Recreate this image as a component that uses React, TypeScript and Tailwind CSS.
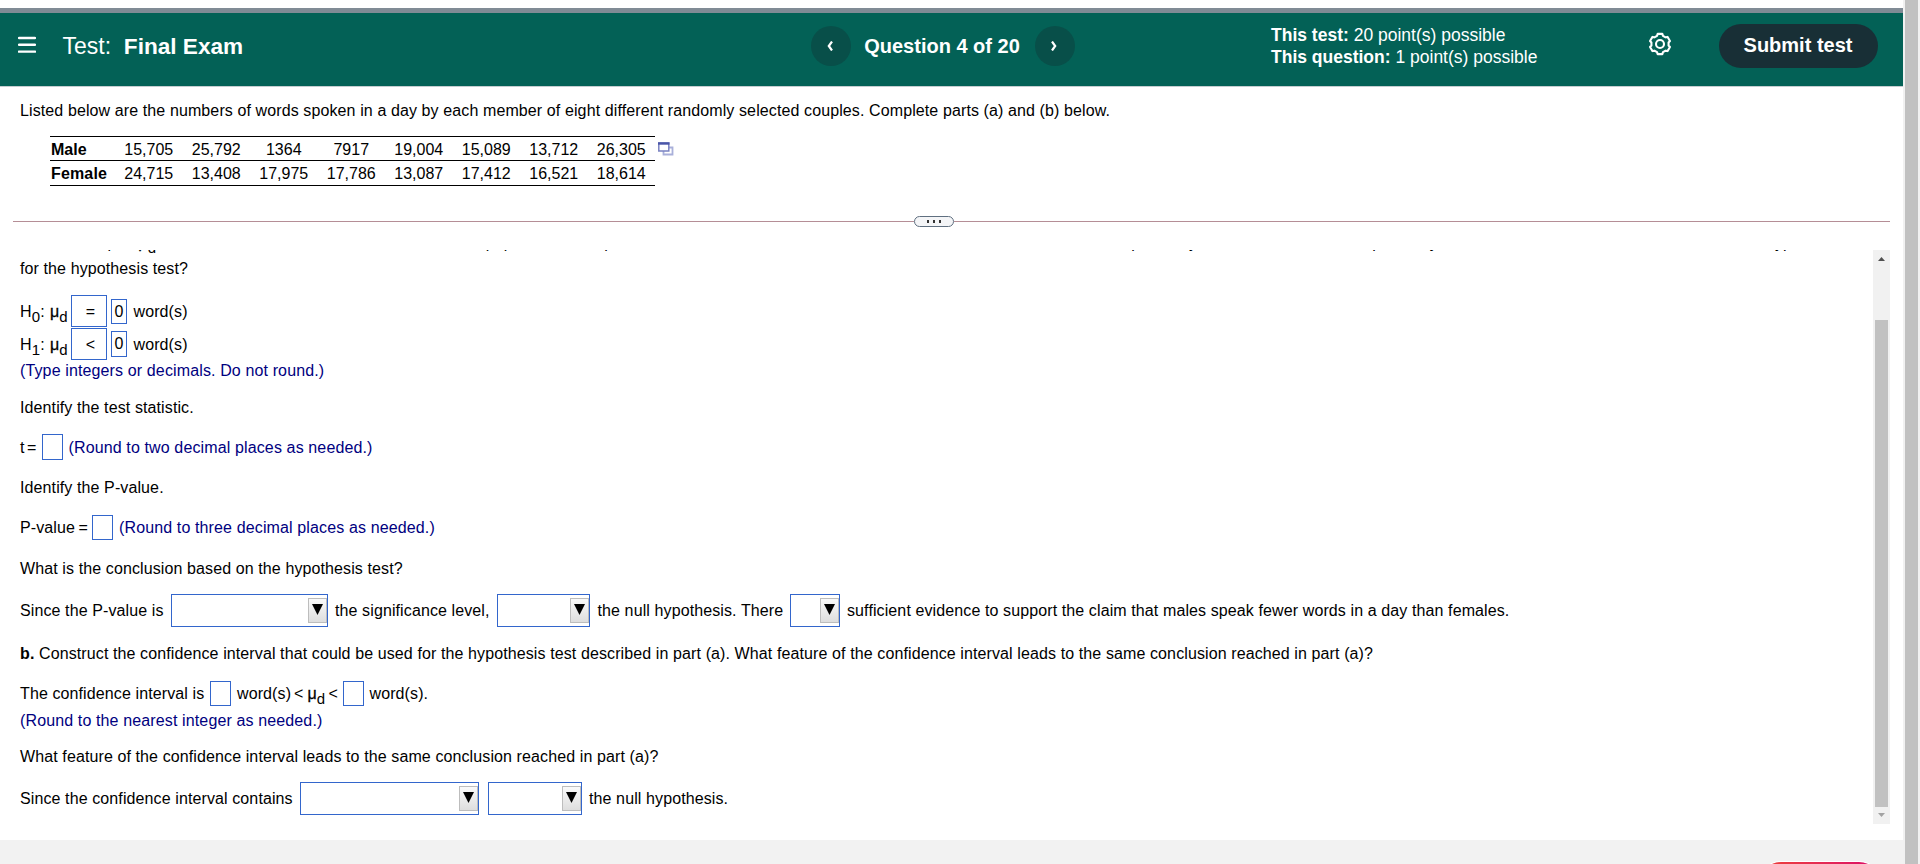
import React from 'react';

const male = ['15,705', '25,792', '1364', '7917', '19,004', '15,089', '13,712', '26,305'];
const female = ['24,715', '13,408', '17,975', '17,786', '13,087', '17,412', '16,521', '18,614'];

// Six rounded teeth, the first one pointing up
const gearPoints = [0, 60, 120, 180, 240, 300]
  .flatMap((tooth) => [[-20, 8.7], [-13, 10.4], [13, 10.4], [20, 8.7]].map(([offset, r]) => {
    const angle = ((tooth + offset - 90) * Math.PI) / 180;
    return `${(12 + r * Math.cos(angle)).toFixed(2)},${(12 + r * Math.sin(angle)).toFixed(2)}`;
  }))
  .join(' ');

function Blank({ className = '', children }: { className?: string; children?: React.ReactNode }) {
  return (
    <span className={`flex shrink-0 items-center justify-center border border-[#3366cc] tracking-normal ${className}`}>
      {children}
    </span>
  );
}

function Dropdown({ className }: { className: string }) {
  return (
    <span className={`flex h-[33px] shrink-0 items-center justify-end border border-[#3366cc] ${className}`}>
      <span className="flex h-[25px] w-[19px] items-center justify-center border border-[#bdbdbd] bg-linear-to-b from-[#fafafa] to-[#dedede] pb-0.5">
        <svg width="11" height="11" viewBox="0 0 11 11">
          <path d="M0 0h11L5.500 11z" fill="#000" />
        </svg>
      </span>
    </span>
  );
}

function Sub({ children }: { children: React.ReactNode }) {
  return <sub className="relative -bottom-[5px] align-baseline text-[15px] leading-0">{children}</sub>;
}

// Population mean of the differences
function Mu() {
  return (
    <>
      <span className="[-webkit-text-stroke:0.3px_#000]">μ</span>
      <Sub>d</Sub>
    </>
  );
}

function Row({ className, children }: { className: string; children: React.ReactNode }) {
  return <div className={`flex items-center whitespace-pre ${className}`}>{children}</div>;
}

function Text({ className = '', children }: { className?: string; children: React.ReactNode }) {
  return <span className={`shrink-0 pt-px ${className}`}>{children}</span>;
}

export default function App() {
  return (
    <div className="flex h-[864px] w-[1920px] overflow-hidden bg-white font-['Liberation_Sans',Arial,sans-serif] text-[16px] leading-[20px] text-black">
      <div className="flex w-[1903px] shrink-0 flex-col">
        <div className="h-2 shrink-0" />
        {/* Header */}
        <header className="flex h-[79px] shrink-0 items-start border-t-[5px] border-b border-t-[#808b95] border-b-[#c5cdd0] bg-[#036156] text-white">
          <svg className="mt-[23px] ml-[18px] shrink-0" width="18" height="18" viewBox="0 0 18 18" stroke="#fff" strokeWidth="2.4" strokeLinecap="round">
            <path d="M1 2h16M1 8.800h16M1 15.600h16" />
          </svg>
          <div className="mt-[21px] ml-[26.500px] w-[748px] text-[23px] leading-6 whitespace-pre">
            Test:  <b className="text-[22.600px]">Final Exam</b>
          </div>
          <div className="mt-[13px] flex w-[460.500px] items-center">
            <span className="flex size-10 items-center justify-center rounded-full bg-[#084f49] pr-px">
              <svg width="6" height="10" viewBox="0 0 6 10" fill="none" stroke="#fff" strokeWidth="2.2">
                <path d="M5 .5L1.800 5L5 9.500" />
              </svg>
            </span>
            <b className="w-[184px] pr-px text-center text-[20px]">Question 4 of 20</b>
            <span className="flex size-10 items-center justify-center rounded-full bg-[#084f49] pr-px">
              <svg width="6" height="10" viewBox="0 0 6 10" fill="none" stroke="#fff" strokeWidth="2.2">
                <path d="M1 .5L4.200 5L1 9.500" />
              </svg>
            </span>
          </div>
          <div className="mt-[11px] w-[377px] text-[17.500px] leading-[22px]">
            <div><b>This test:</b> 20 point(s) possible</div>
            <div><b>This question:</b> 1 point(s) possible</div>
          </div>
          <svg className="mt-[19px] shrink-0" width="24" height="24" viewBox="0 0 24 24" fill="none" stroke="#fff" strokeWidth="2.1" strokeLinejoin="round">
            <polygon points={gearPoints} />
            <circle cx="12" cy="12" r="4" />
          </svg>
          <button className="mt-[11px] ml-[47px] h-11 w-[159px] rounded-full bg-[#182f36] pr-px pb-0.5 text-[20px] font-bold">Submit test</button>
        </header>

        {/* Question data */}
        <section className="h-[129px] shrink-0 pt-[14px] pl-5">
          <p className="tracking-[0.108px]">Listed below are the numbers of words spoken in a day by each member of eight different randomly selected couples. Complete parts (a) and (b) below.</p>
          <div className="mt-[15px] ml-[30px] flex">
            <div className="w-[605px] border-y border-black">
              <Row className="h-6 border-b border-black pt-[2px] pl-px">
                <b className="w-[64px]">Male</b>
                {male.map((n) => <span key={n} className="w-[67.500px] text-center">{n}</span>)}
              </Row>
              <Row className="h-6 pt-px pl-px">
                <b className="w-[64px] tracking-[0.15px]">Female</b>
                {female.map((n) => <span key={n} className="w-[67.500px] text-center">{n}</span>)}
              </Row>
            </div>
            <svg className="mt-1.5 ml-[3px]" width="16" height="14" viewBox="0 0 16 14" fill="#fff">
              <path d="M5.500 5.500h9v7h-9z" stroke="#a9b0da" strokeWidth="1.800" />
              <path d="M.8 1h10v8H.8z" stroke="#7a82c2" strokeWidth="1.500" />
              <path d="M0 1.500h11.500" stroke="#4a55a8" strokeWidth="2.400" />
            </svg>
          </div>
        </section>

        {/* Splitter */}
        <div className="ml-[13px] flex h-[11px] w-[1877px] shrink-0 items-center">
          <div className="h-px w-[901px] bg-[#b58e96]" />
          <div className="flex h-[11px] w-10 items-center justify-center gap-[4px] rounded-md border border-[#5f6f80] bg-[#f4f5f7]">
            <i className="h-[3px] w-[2px] bg-[#333]" />
            <i className="h-[3px] w-[2px] bg-[#333]" />
            <i className="h-[3px] w-[2px] bg-[#333]" />
          </div>
          <div className="h-px flex-1 bg-[#b58e96]" />
        </div>

        {/* Answer area */}
        <main className="mt-[23px] flex h-[574px] shrink-0">
          <div className="w-[1873px] overflow-hidden pl-5 tracking-[0.108px]">
            <p className="-mt-[17px] h-5 whitespace-nowrap">
              In this example, <Mu /> is the mean value of the differences d for the population of all pairs of data, where each individual difference d is defined as the words spoken by the male minus words spoken by the female. What are the null and alternative hypotheses
            </p>
            <p className="mt-[6px]">for the hypothesis test?</p>

            <Row className="mt-4 h-8">
              <Text className="w-[30px]">H<Sub>0</Sub>:</Text>
              <Text className="w-[21px]"><Mu /></Text>
              <Blank className="h-8 w-9 pt-px pl-[3px]">=</Blank>
              <Blank className="mt-px ml-1 h-[25px] w-4">0</Blank>
              <Text className="ml-[6.500px]">word(s)</Text>
            </Row>
            <Row className="mt-px h-8">
              <Text className="w-[30px]">H<Sub>1</Sub>:</Text>
              <Text className="w-[21px]"><Mu /></Text>
              <Blank className="h-8 w-9 pt-px pl-[3px]">&lt;</Blank>
              <Blank className="ml-1 h-[26px] w-4">0</Blank>
              <Text className="ml-[6.500px]">word(s)</Text>
            </Row>
            <p className="mt-px tracking-[0.13px] text-[#000080]">(Type integers or decimals. Do not round.)</p>

            <p className="mt-[17px]">Identify the test statistic.</p>
            <Row className="mt-4 h-[26px]">
              <Text className="w-[22px] -tracking-[1px]">t =</Text>
              <Blank className="h-[26px] w-[21px]" />
              <Text className="ml-[5.500px] tracking-[0.13px] text-[#000080]">(Round to two decimal places as needed.)</Text>
            </Row>

            <p className="mt-[18px]">Identify the P-value.</p>
            <Row className="mt-[17px] h-[25px]">
              <Text className="w-[72px] pt-[3px]">P-value<span className="ml-[3.500px]">=</span></Text>
              <Blank className="h-[25px] w-[21px]" />
              <Text className="ml-[6px] pt-[3px] tracking-[0.13px] text-[#000080]">(Round to three decimal places as needed.)</Text>
            </Row>

            <p className="mt-[19px]">What is the conclusion based on the hypothesis test?</p>
            <Row className="mt-[15px] h-[33px]">
              <Text className="w-[151px]">Since the P-value is</Text>
              <Dropdown className="w-[157px]" />
              <Text className="w-[169px] pl-[7px]">the significance level,</Text>
              <Dropdown className="w-[93px]" />
              <Text className="w-[200px] pl-[7.500px]">the null hypothesis. There</Text>
              <Dropdown className="w-[50px]" />
              <Text className="pl-[7px]">sufficient evidence to support the claim that males speak fewer words in a day than females.</Text>
            </Row>

            <p className="mt-[17px]"><b>b.</b> Construct the confidence interval that could be used for the hypothesis test described in part (a). What feature of the confidence interval leads to the same conclusion reached in part (a)?</p>
            <Row className="mt-[17px] h-[25px]">
              <Text className="w-[190px]">The confidence interval is</Text>
              <Blank className="h-[25px] w-[21px]" />
              <Text className="w-[63px] pl-[6px]">word(s)</Text>
              <Text className="w-[13.500px]">&lt;</Text>
              <Text className="w-[21px]"><Mu /></Text>
              <Text className="w-[14.500px]">&lt;</Text>
              <Blank className="h-[25px] w-[21px]" />
              <Text className="pl-[5.500px]">word(s).</Text>
            </Row>
            <p className="mt-[5px] tracking-[0.13px] text-[#000080]">(Round to the nearest integer as needed.)</p>

            <p className="mt-4">What feature of the confidence interval leads to the same conclusion reached in part (a)?</p>
            <Row className="mt-[15px] h-[33px]">
              <Text className="w-[280px]">Since the confidence interval contains</Text>
              <Dropdown className="w-[179px]" />
              <Dropdown className="ml-[9px] w-[94px]" />
              <Text className="pl-[7px]">the null hypothesis.</Text>
            </Row>
          </div>

          {/* Scrollbar */}
          <div className="flex w-[17px] flex-col items-center bg-[#f1f1f1]">
            <svg className="mt-[7px]" width="7" height="4" viewBox="0 0 7 4">
              <path d="M0 4L3.500 0L7 4z" fill="#505050" />
            </svg>
            <div className="mt-[59px] h-[487px] w-[13px] bg-[#c1c1c1]" />
            <svg className="mt-[6px]" width="7" height="4" viewBox="0 0 7 4">
              <path d="M0 0h7L3.500 4z" fill="#a3a3a3" />
            </svg>
          </div>
        </main>

        {/* Footer */}
        <footer className="mt-4 flex h-6 shrink-0 items-start justify-end overflow-hidden bg-[#f2f2f2] pr-[22px]">
          <div className="mt-[22px] h-11 w-[122px] shrink-0 rounded-full bg-linear-to-r from-[#ee4036] to-[#db0068] shadow-[0_0_0_1px_#fff]" />
        </footer>
      </div>

      <div className="flex w-[17px] shrink-0 justify-center bg-[#f1f1f1]">
        <div className="w-[13px] bg-[#c1c1c1]" />
      </div>
    </div>
  );
}
